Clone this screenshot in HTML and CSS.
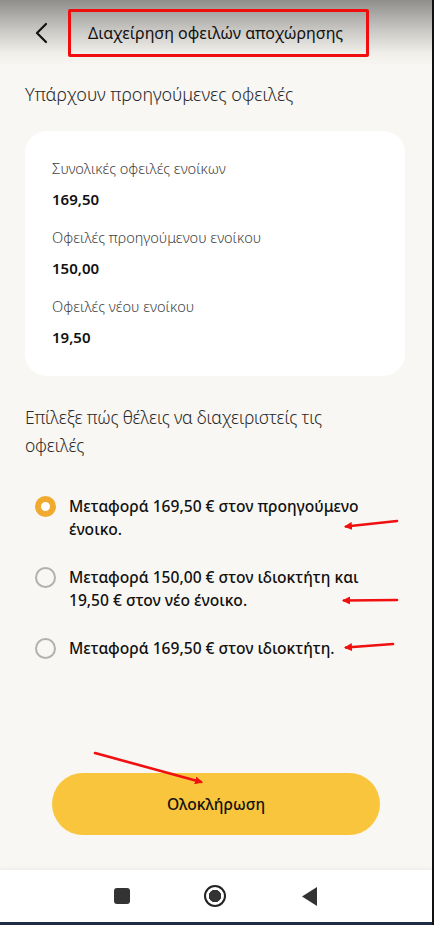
FILE: index.html
```html
<!DOCTYPE html>
<html lang="el">
<head>
<meta charset="utf-8">
<link rel="stylesheet" href="styles.css">
</head>
<body>
<div class="screen">
  <header class="topbar">
    <button class="back" aria-label="Πίσω">
      <svg width="14" height="22" viewBox="0 0 14 22"><path d="M12 2 L3 11 L12 20" fill="none" stroke="#111" stroke-width="2.2" stroke-linecap="round" stroke-linejoin="round"/></svg>
    </button>
    <div class="title-box"><h1 class="title">Διαχείρηση οφειλών αποχώρησης</h1></div>
  </header>

  <main class="content">
    <h2 class="section-title">Υπάρχουν προηγούμενες οφειλές</h2>
    <section class="card">
      <div class="item"><div class="label">Συνολικές οφειλές ενοίκων</div><div class="value">169,50</div></div>
      <div class="item"><div class="label">Οφειλές προηγούμενου ενοίκου</div><div class="value">150,00</div></div>
      <div class="item"><div class="label">Οφειλές νέου ενοίκου</div><div class="value">19,50</div></div>
    </section>

    <h2 class="section-title choose">Επίλεξε πώς θέλεις να διαχειριστείς τις οφειλές</h2>

    <div class="options">
      <label class="option"><span class="radio checked"></span><span class="opt-text">Μεταφορά 169,50 € στον προηγούμενο ένοικο.</span></label>
      <label class="option"><span class="radio"></span><span class="opt-text">Μεταφορά 150,00 € στον ιδιοκτήτη και 19,50 € στον νέο ένοικο.</span></label>
      <label class="option"><span class="radio"></span><span class="opt-text">Μεταφορά 169,50 € στον ιδιοκτήτη.</span></label>
    </div>
  </main>

  <div class="actions">
    <button class="primary">Ολοκλήρωση</button>
  </div>

  <nav class="navbar">
    <span class="nav-square"></span>
    <span class="nav-home"></span>
    <svg class="nav-back" width="15" height="19" viewBox="0 0 15 19"><path d="M15 0 L15 19 L0 9.5 Z" fill="#333"/></svg>
  </nav>
  <div class="bottom-line"></div>

  <svg class="annotations" width="434" height="925" viewBox="0 0 434 925">
    <defs>
      <marker id="ah" markerWidth="8" markerHeight="8" refX="6" refY="4" orient="auto" markerUnits="userSpaceOnUse">
        <path d="M0 0 L8 4 L0 8 Z" fill="#f01010"/>
      </marker>
    </defs>
    <g stroke="#f01010" stroke-width="2.6" stroke-linecap="round" fill="none">
      <path d="M397 521 L346 526.5" marker-end="url(#ah)"/>
      <path d="M397 600 L344 600.5" marker-end="url(#ah)"/>
      <path d="M393 644 L346 647.5" marker-end="url(#ah)"/>
      <path d="M95 753 L201 782" marker-end="url(#ah)"/>
    </g>
  </svg>
</div>
</body>
</html>
```

FILE: styles.css
```css
* { box-sizing: border-box; }
html, body { margin: 0; padding: 0; }
body {
  width: 434px;
  height: 925px;
  overflow: hidden;
  font-family: "Noto Sans", "Inter", sans-serif;
  color: #1a1a1a;
}
.screen {
  position: relative;
  width: 434px;
  height: 925px;
  background: #f9f7f3;
  border-right: 2px solid #111;
  display: flex;
  flex-direction: column;
}
.topbar {
  height: 66px;
  flex: none;
  display: flex;
  align-items: center;
  padding-left: 34px;
  background: linear-gradient(to bottom, #8f8e8b 0%, #c9c7c3 45%, #f0eee9 80%, #f9f7f3 100%);
}
.back {
  background: none;
  border: 0;
  padding: 0;
  width: 18px;
  height: 22px;
  display: flex;
  align-items: center;
  margin-top: -1px;
}
.title-box {
  margin-left: 16px;
  margin-top: -1px;
  width: 301px;
  height: 48px;
  border: 3px solid #f00d0d;
  border-radius: 2px;
  display: flex;
  align-items: center;
  padding-left: 17px;
}
.title {
  margin: 0;
  font-size: 16px;
  font-weight: 400;
  color: #111;
}
.content {
  flex: 1;
  padding: 0 27px 0 25px;
}
.section-title {
  margin: 14px 0 0;
  font-size: 18px;
  font-weight: 300;
  line-height: 28px;
  color: #2a2a2a;
}
.card {
  margin-top: 23px;
  background: #fff;
  border-radius: 22px;
  padding: 27px 27px 0;
  height: 245px;
}
.item { margin-bottom: 18px; }
.label {
  font-size: 14.6px;
  font-weight: 300;
  color: #444;
  line-height: 20px;
}
.value {
  margin-top: 11px;
  font-size: 15px;
  font-weight: 560;
  line-height: 20px;
  color: #111;
}
.choose {
  margin-top: 27px;
  max-width: 350px;
  font-size: 17.5px;
  letter-spacing: -0.2px;
}
.options {
  margin-top: 36px;
  display: flex;
  flex-direction: column;
  gap: 25px;
}
.option {
  display: flex;
  align-items: flex-start;
  gap: 13px;
  padding-left: 10px;
}
.radio {
  flex: none;
  width: 21px;
  height: 21px;
  border-radius: 50%;
  border: 2px solid #b3b1ae;
  margin-top: 1px;
}
.radio.checked {
  border: 6.5px solid #efaa2f;
  background: #fff;
}
.opt-text {
  font-size: 15.6px;
  font-weight: 480;
  line-height: 23px;
  color: #111;
  max-width: 300px;
}
.actions {
  flex: none;
  padding: 0 52px 35px 52px;
}
.primary {
  display: block;
  width: 328px;
  height: 62px;
  border: 0;
  border-radius: 31px;
  background: #f9c53d;
  font-family: inherit;
  font-size: 15.6px;
  font-weight: 480;
  color: #111;
}
.navbar {
  flex: none;
  height: 52px;
  background: #fff;
  box-shadow: 0 -2px 3px rgba(0,0,0,0.04);
  display: flex;
  align-items: center;
  padding-left: 114px;
}
.nav-square {
  width: 16px;
  height: 16px;
  border-radius: 3px;
  background: #333;
}
.nav-home {
  margin-left: 74px;
  width: 22px;
  height: 22px;
  border-radius: 50%;
  border: 2.5px solid #222;
  background: radial-gradient(circle, #333 0 6px, #fff 6.5px);
}
.nav-back {
  margin-left: 76px;
}
.bottom-line {
  flex: none;
  height: 3px;
  background: #1f2b45;
}
.annotations {
  position: absolute;
  left: 0;
  top: 0;
  pointer-events: none;
}
```
